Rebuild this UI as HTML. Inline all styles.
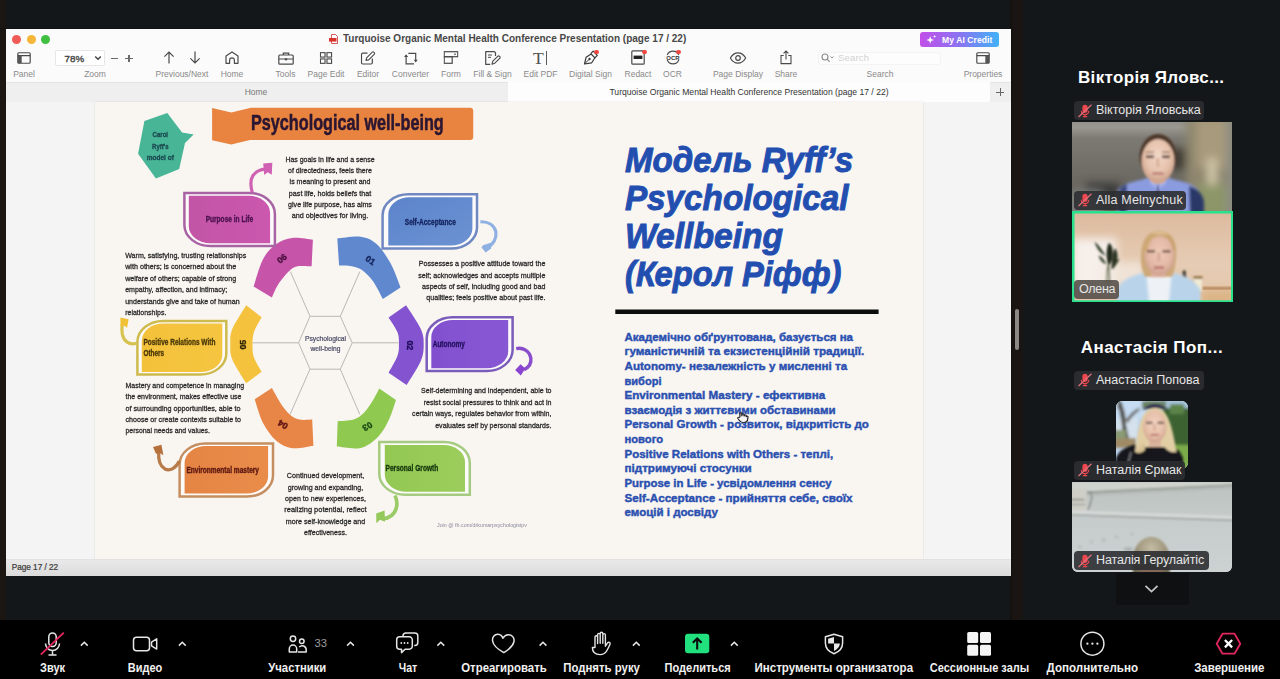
<!DOCTYPE html>
<html><head><meta charset="utf-8">
<style>
*{box-sizing:border-box;margin:0;padding:0}
html,body{width:1280px;height:679px;overflow:hidden;background:#14171a;font-family:"Liberation Sans",sans-serif;}
.abs{position:absolute}
#root{position:relative;width:1280px;height:679px;overflow:hidden;background:#14171a}
/* side strips */
#lstrip{left:0;top:0;width:6px;height:620px;background:#1c1613}
#rstrip{left:1010px;top:0;width:14px;height:620px;background:linear-gradient(90deg,#120f0d 0,#1a1512 25%,#1a1512 80%,#14171a 100%)}
/* pdf window */
#win{left:6px;top:28px;width:1005px;height:548px;background:#f4f4f4;overflow:hidden}
#titlebar{left:0;top:0;width:1005px;height:54px;background:#fbfbfb}
#tabbar{left:0;top:54px;width:1005px;height:20px;background:#efefef;border-top:1px solid #e4e4e4}
#tabactive{left:502px;top:54px;width:482px;height:20px;background:#fdfdfd}
#content{left:0;top:74px;width:1005px;height:457px;background:#f4f4f4}
#slide{left:89px;top:0;width:828px;height:457px;background:#f9f5f1;box-shadow:0 0 1.5px rgba(0,0,0,.14)}
#status{left:0;top:531px;width:1005px;height:17px;background:linear-gradient(#eae9e9,#dcdbdb);border-top:1px solid #e2e2e2}
.tl{width:9px;height:9px;border-radius:50%;top:7px}
.lbl{font-size:8.5px;color:#8a8a8a;top:41.2px;white-space:nowrap;transform:translateX(-50%);letter-spacing:0}
.ic{top:21px;transform:translateX(-50%)}
/* bottom bar */
#bbar{left:0;top:620px;width:1280px;height:59px;background:#000}
.bl{color:#fff;font-size:12px;font-weight:bold;top:41px;white-space:nowrap;transform:translateX(-50%);letter-spacing:-.1px}
.bi{transform:translate(-50%,-50%);top:23px}
/* right panel */
.ptitle{color:#fff;font-weight:bold;font-size:17px;white-space:nowrap;letter-spacing:.34px}
.tag{height:19px;background:rgba(44,45,49,.9);border-radius:4px;color:#e6e6e6;font-size:12.5px;line-height:19px;white-space:nowrap;padding-left:22px;padding-right:4px}
.tag.nomic{padding-left:5px}
</style></head><body>
<div id="root">
<div id="lstrip" class="abs"></div>
<div id="rstrip" class="abs"></div>
<div class="abs" style="left:1014.500px;top:309px;width:4.500px;height:40.500px;border-radius:2px;background:#8c8884"></div>

<div id="win" class="abs">
  <div id="titlebar" class="abs">
    <div class="abs tl" style="left:6px;background:#f05b56"></div>
    <div class="abs tl" style="left:20.5px;background:#f5b63a"></div>
    <div class="abs tl" style="left:35px;background:#3fc041"></div>
    <!-- title -->
    <svg class="abs" style="left:323px;top:6px" width="10" height="10" viewBox="0 0 10 10"><path d="M2.5 .5h4l2 2v7h-6z" fill="#fff" stroke="#c33" stroke-width=".8"/><rect x="0" y="4" width="7.5" height="3.6" fill="#d8322c"/></svg>
    <div class="abs" style="left:337px;top:5px;font-size:10px;font-weight:bold;color:#484848;white-space:nowrap;letter-spacing:0">Turquoise Organic Mental Health Conference Presentation (page 17 / 22)</div>
    <!-- AI credit -->
    <div class="abs" style="left:914px;top:4px;width:79px;height:15px;border-radius:3px;background:linear-gradient(90deg,#c24fe8 0,#8a73f2 50%,#41b2f7 100%)"></div>
    <svg class="abs" style="left:920px;top:6px" width="12" height="11" viewBox="0 0 12 11"><path d="M4.2 2.2 5.2 5 8 6 5.2 7 4.2 9.8 3.2 7 .4 6 3.2 5z" fill="#fff"/><path d="M8.6 1l.45 1.1 1.1.45-1.1.45L8.6 4.1 8.15 3 7.05 2.55 8.15 2.1z" fill="#fff"/></svg>
    <div class="abs" style="left:936px;top:6.5px;font-size:8.5px;font-weight:bold;color:#fff;white-space:nowrap;letter-spacing:.1px">My AI Credit</div>

    <!-- Panel -->
    <svg class="abs ic" style="left:18px;top:24px" width="14.500" height="12" viewBox="0 0 15 13"><rect x=".8" y=".8" width="13.4" height="11.4" rx="1" fill="none" stroke="#4a4a4a" stroke-width="1.3"/><path d="M.8 4h13.4" stroke="#4a4a4a" stroke-width="1.3"/><rect x="1" y="4" width="4" height="8" fill="#555"/></svg>
    <div class="abs lbl" style="left:18px">Panel</div>
    <!-- Zoom -->
    <div class="abs" style="left:49px;top:22px;width:50px;height:16px;background:#fff;border:1px solid #e6e6e6;border-radius:2px"></div>
    <div class="abs" style="left:58.500px;top:24.500px;font-size:9.800px;color:#444;-webkit-text-stroke:.35px #444;letter-spacing:0">78%</div>
    <svg class="abs" style="left:88px;top:27px" width="8" height="6" viewBox="0 0 8 6"><path d="M1.2 1.5 4 4.3 6.8 1.5" fill="none" stroke="#444" stroke-width="1.4"/></svg>
    <div class="abs" style="left:104.500px;top:29.800px;width:7.500px;height:1.200px;background:#6a6a6a"></div>
    <div class="abs" style="left:119.300px;top:29.800px;width:7.500px;height:1.200px;background:#6a6a6a"></div>
    <div class="abs" style="left:122.450px;top:26.500px;width:1.200px;height:7.800px;background:#6a6a6a"></div>
    <div class="abs lbl" style="left:89px">Zoom</div>
    <!-- Prev/Next -->
    <svg class="abs ic" style="left:163px;top:23px" width="12" height="13" viewBox="0 0 12 13"><path d="M6 12.5V1.2M1.4 5.6 6 1l4.6 4.6" fill="none" stroke="#4a4a4a" stroke-width="1.2"/></svg>
    <svg class="abs ic" style="left:189px;top:23px" width="12" height="13" viewBox="0 0 12 13"><path d="M6 .5v11.3M1.4 7.4 6 12l4.6-4.6" fill="none" stroke="#4a4a4a" stroke-width="1.2"/></svg>
    <div class="abs lbl" style="left:176px">Previous/Next</div>
    <!-- Home -->
    <svg class="abs ic" style="left:226px;top:23px" width="14" height="13" viewBox="0 0 14 13"><path d="M1 12.3V5L7 .9 13 5v7.3H9.4V9.2a2.4 2.4 0 0 0-4.8 0v3.1z" fill="none" stroke="#4a4a4a" stroke-width="1.2" stroke-linejoin="round"/></svg>
    <div class="abs lbl" style="left:226px">Home</div>
    <!-- Tools -->
    <svg class="abs ic" style="left:279.5px;top:24px" width="16" height="13" viewBox="0 0 16 13"><rect x=".8" y="3" width="14.4" height="9.2" rx="1" fill="none" stroke="#4a4a4a" stroke-width="1.2"/><path d="M5.3 3V1.2h5.4V3M.8 7h14.4" fill="none" stroke="#4a4a4a" stroke-width="1.2"/><rect x="6.8" y="6.3" width="2.4" height="2" fill="#4a4a4a"/></svg>
    <div class="abs lbl" style="left:279.5px">Tools</div>
    <!-- Page Edit -->
    <svg class="abs ic" style="left:320px;top:24px" width="12.500" height="12" viewBox="0 0 13 13" preserveAspectRatio="none"><g fill="none" stroke="#4a4a4a" stroke-width="1.2"><rect x=".7" y=".7" width="4.8" height="4.8"/><rect x="7.5" y=".7" width="4.8" height="4.8"/><rect x=".7" y="7.5" width="4.8" height="4.8"/><rect x="7.5" y="7.5" width="4.8" height="4.8"/></g></svg>
    <div class="abs lbl" style="left:320px">Page Edit</div>
    <!-- Editor -->
    <svg class="abs ic" style="left:362px;top:23px" width="15" height="14" viewBox="0 0 15 14"><path d="M7 2.2H2.2a1.2 1.2 0 0 0-1.2 1.2v8.4A1.2 1.2 0 0 0 2.200 13h8.400a1.2 1.2 0 0 0 1.200-1.200V7.500" fill="none" stroke="#4a4a4a" stroke-width="1.2"/><path d="M5.500 9.500l.6-2.700L11.800 1.100a1 1 0 0 1 1.400 0l.7.700a1 1 0 0 1 0 1.400L8.200 8.900z" fill="none" stroke="#4a4a4a" stroke-width="1.100" stroke-linejoin="round"/></svg>
    <div class="abs lbl" style="left:362px">Editor</div>
    <!-- Converter -->
    <svg class="abs ic" style="left:404.500px;top:23.500px" width="15" height="13" viewBox="0 0 15 13"><path d="M2.600 3.500V11.800H10.500M4.800 1.300H12.200V9" fill="none" stroke="#4a4a4a" stroke-width="1.200"/><path d="M.6 5 2.600 2.200 4.600 5zM10.200 7.800 12.200 10.600 14.200 7.800z" fill="#4a4a4a"/></svg>
    <div class="abs lbl" style="left:404.500px">Converter</div>
    <!-- Form -->
    <svg class="abs ic" style="left:445px;top:23px" width="15" height="13" viewBox="0 0 15 13"><rect x=".7" y=".7" width="13.600" height="5" fill="none" stroke="#4a4a4a" stroke-width="1.200"/><rect x=".7" y="5.700" width="8" height="6.600" fill="none" stroke="#4a4a4a" stroke-width="1.200"/><path d="M10.500 3.200h2" stroke="#4a4a4a" stroke-width="1"/></svg>
    <div class="abs lbl" style="left:445px">Form</div>
    <!-- Fill & Sign -->
    <svg class="abs ic" style="left:487px;top:23px" width="16" height="14" viewBox="0 0 16 14"><path d="M10.500 5V1.600L9.400.7H.7v12.600h4.500" fill="none" stroke="#4a4a4a" stroke-width="1.200" stroke-linejoin="round"/><path d="M3 4h4M3 6.300h3" stroke="#4a4a4a" stroke-width="1"/><path d="M7 13.200l.8-3L12.700 5.300a1.300 1.300 0 0 1 1.800 0l.2.200a1.300 1.300 0 0 1 0 1.800L9.800 12.200z" fill="none" stroke="#4a4a4a" stroke-width="1.100" stroke-linejoin="round"/></svg>
    <div class="abs lbl" style="left:486.500px">Fill &amp; Sign</div>
    <!-- Edit PDF -->
    <svg class="abs" style="left:524px;top:20px" width="20" height="20" viewBox="0 0 20 20"><text x="8.400" y="16" text-anchor="middle" font-family="Liberation Serif, serif" font-size="17.600" fill="#505050">T</text></svg>
    <div class="abs" style="left:540.400px;top:23.300px;width:1.100px;height:13.400px;background:#5a5a5a"></div>
    <div class="abs lbl" style="left:534.500px">Edit PDF</div>
    <!-- Digital Sign -->
    <svg class="abs ic" style="left:584.500px;top:21px" width="17" height="17" viewBox="0 0 17 17"><path d="M2 15l1.600-6.800 5-3.200 3.800 3.800-3.200 5z" fill="none" stroke="#3a3a3a" stroke-width="1.200" stroke-linejoin="round"/><path d="M8.200 4.600l2.400-2.400 4.200 4.200-2.400 2.400" fill="none" stroke="#3a3a3a" stroke-width="1.200" stroke-linejoin="round"/><path d="M2 15l4.500-4.500" stroke="#3a3a3a" stroke-width="1"/><circle cx="7" cy="10" r="1.200" fill="#3a3a3a"/></svg>
    <div class="abs" style="left:588px;top:21.600px;width:4.600px;height:4.600px;border-radius:50%;background:#f0483e"></div>
    <div class="abs lbl" style="left:584.500px">Digital Sign</div>
    <!-- Redact -->
    <svg class="abs ic" style="left:632px;top:22px" width="14" height="15" viewBox="0 0 14 15"><rect x=".8" y=".8" width="12.400" height="13.400" rx="1" fill="none" stroke="#4a4a4a" stroke-width="1.200"/><rect x="2.600" y="5.600" width="8.800" height="3.400" fill="#222"/></svg>
    <div class="abs" style="left:636px;top:21.600px;width:4.600px;height:4.600px;border-radius:50%;background:#f0483e"></div>
    <div class="abs lbl" style="left:632px">Redact</div>
    <!-- OCR -->
    <svg class="abs ic" style="left:666.500px;top:22px" width="16" height="15" viewBox="0 0 16 15"><path d="M2.200 5a6.300 6.300 0 0 1 11.600 0M13.800 10a6.300 6.300 0 0 1-11.600 0" fill="none" stroke="#4a4a4a" stroke-width="1.100"/><text x="8" y="9.700" font-family="Liberation Sans" font-weight="bold" font-size="6" text-anchor="middle" fill="#333">OCR</text></svg>
    <div class="abs" style="left:670px;top:21.600px;width:4.600px;height:4.600px;border-radius:50%;background:#f0483e"></div>
    <div class="abs lbl" style="left:666.500px">OCR</div>
    <!-- Page Display -->
    <svg class="abs ic" style="left:732px;top:24px" width="17" height="12" viewBox="0 0 17 12"><path d="M.8 6C3 2.300 5.600 .8 8.500 .8S14 2.300 16.200 6C14 9.700 11.400 11.200 8.500 11.200S3 9.700 .8 6z" fill="none" stroke="#4a4a4a" stroke-width="1.200"/><circle cx="8.500" cy="6" r="2.300" fill="none" stroke="#4a4a4a" stroke-width="1.200"/></svg>
    <div class="abs lbl" style="left:732px">Page Display</div>
    <!-- Share -->
    <svg class="abs ic" style="left:780px;top:22.300px" width="12.500" height="14.500" viewBox="0 0 13 16"><path d="M4 6H1v9h11V6H9" fill="none" stroke="#4a4a4a" stroke-width="1.200"/><path d="M6.500 10.500V1.200M3.800 3.800 6.500 1.100 9.200 3.800" fill="none" stroke="#4a4a4a" stroke-width="1.200"/></svg>
    <div class="abs lbl" style="left:780px">Share</div>
    <!-- Search -->
    <div class="abs" style="left:812px;top:24px;width:123px;height:13px;background:#fdfdfd;border:1px solid #f3f3f3;border-radius:3px"></div>
    <svg class="abs" style="left:815px;top:25px" width="14" height="10" viewBox="0 0 14 10"><circle cx="4" cy="4" r="3" fill="none" stroke="#8a8a8a" stroke-width="1.100"/><path d="M6.200 6.200 8.600 8.800" stroke="#8a8a8a" stroke-width="1.100"/><path d="M9.500 3.500l1.500 1.500 1.500-1.500" fill="none" stroke="#8a8a8a" stroke-width="1"/></svg>
    <div class="abs" style="left:832px;top:24.300px;font-size:9.500px;color:#d2d2d2;letter-spacing:.2px">Search</div>
    <div class="abs lbl" style="left:874px">Search</div>
    <!-- Properties -->
    <svg class="abs ic" style="left:977px;top:24px" width="14.500" height="12" viewBox="0 0 15 13"><rect x=".8" y=".8" width="13.400" height="11.400" rx="1" fill="none" stroke="#4a4a4a" stroke-width="1.300"/><path d="M.8 4h13.400" stroke="#4a4a4a" stroke-width="1.300"/><rect x="10" y="4" width="4" height="8" fill="#555"/></svg>
    <div class="abs lbl" style="left:977px">Properties</div>
  </div>
  <div id="tabbar" class="abs"></div>
  <div id="tabactive" class="abs"></div>
  <div class="abs" style="left:250px;top:59px;font-size:8.5px;color:#777;transform:translateX(-50%)">Home</div>
  <div class="abs" style="left:743px;top:59px;font-size:8.6px;color:#333;transform:translateX(-50%);white-space:nowrap">Turquoise Organic Mental Health Conference Presentation (page 17 / 22)</div>
  <div class="abs" style="left:990px;top:63.500px;width:8px;height:1px;background:#666"></div>
  <div class="abs" style="left:993.500px;top:60px;width:1px;height:8px;background:#666"></div>
  <div id="content" class="abs">
    <div id="slide" class="abs"><!--SLIDE--><svg class="abs" style="left:0;top:0" width="828" height="457" viewBox="95 102 828 457" font-family="Liberation Sans, sans-serif">
<defs>
<linearGradient id="gpk" x1="0" y1="0" x2="1" y2="0"><stop offset="0" stop-color="#c255a6"/><stop offset="1" stop-color="#cb58ae"/></linearGradient>
<linearGradient id="gbl" x1="0" y1="0" x2="1" y2="1"><stop offset="0" stop-color="#5b84cb"/><stop offset="1" stop-color="#6c92d2"/></linearGradient>
<linearGradient id="gpu" x1="0" y1="0" x2="1" y2="0"><stop offset="0" stop-color="#8250cf"/><stop offset="1" stop-color="#8758d4"/></linearGradient>
<linearGradient id="gye" x1="0" y1="0" x2="1" y2="0"><stop offset="0" stop-color="#f4c13a"/><stop offset="1" stop-color="#f5c540"/></linearGradient>
<linearGradient id="gor" x1="0" y1="0" x2="1" y2="0"><stop offset="0" stop-color="#e58544"/><stop offset="1" stop-color="#e98c4a"/></linearGradient>
<linearGradient id="ggr" x1="0" y1="0" x2="1" y2="0"><stop offset="0" stop-color="#93c853"/><stop offset="1" stop-color="#9ccd5c"/></linearGradient>
<filter id="bl" x="-5%" y="-5%" width="110%" height="110%"><feGaussianBlur stdDeviation="0.45"/></filter>
</defs>
<g filter="url(#bl)">
<path d="M144.4 121.1L167.3 112.9L182.1 132.6L193.6 134.5L185 143.1L179.2 169L155.9 178.6L138.1 153.7Z" fill="#47b596"/>
<text x="160.3" y="137.0" font-size="7.2" text-anchor="middle" fill="#1d4a52" font-weight="bold" textLength="15.5" lengthAdjust="spacingAndGlyphs"  stroke="#1d4a52" stroke-width="0.32">Carol</text>
<text x="160.3" y="148.5" font-size="7.2" text-anchor="middle" fill="#1d4a52" font-weight="bold" textLength="16.5" lengthAdjust="spacingAndGlyphs"  stroke="#1d4a52" stroke-width="0.32">Ryff's</text>
<text x="160.3" y="160.0" font-size="7.2" text-anchor="middle" fill="#1d4a52" font-weight="bold" textLength="27" lengthAdjust="spacingAndGlyphs"  stroke="#1d4a52" stroke-width="0.32">model of</text>
<path d="M212.1 108L231.2 112.4L248 108.6Q249 107.8 252 107.7H470.2Q473.2 107.7 473.2 110.7V137Q473.2 140 470.2 140H250L231.2 144.5L212.1 140.2Z" fill="#e8843f"/>
<text x="251" y="130.4" font-size="22.3" text-anchor="start" fill="#2a1530" font-weight="bold" textLength="192.7" lengthAdjust="spacingAndGlyphs"  stroke="#2a1530" stroke-width="0.55">Psychological well-being</text>
<text x="330" y="162.0" font-size="8" text-anchor="middle" fill="#2b2b2b" font-weight="normal" textLength="89.2" lengthAdjust="spacingAndGlyphs"  stroke="#2b2b2b" stroke-width="0.3">Has goals in life and a sense</text>
<text x="330" y="173.17" font-size="8" text-anchor="middle" fill="#2b2b2b" font-weight="normal" textLength="83.8" lengthAdjust="spacingAndGlyphs"  stroke="#2b2b2b" stroke-width="0.3">of directedness, feels there</text>
<text x="330" y="184.34" font-size="8" text-anchor="middle" fill="#2b2b2b" font-weight="normal" textLength="80.8" lengthAdjust="spacingAndGlyphs"  stroke="#2b2b2b" stroke-width="0.3">is meaning to present and</text>
<text x="330" y="195.51" font-size="8" text-anchor="middle" fill="#2b2b2b" font-weight="normal" textLength="82.3" lengthAdjust="spacingAndGlyphs"  stroke="#2b2b2b" stroke-width="0.3">past life, holds beliefs that</text>
<text x="330" y="206.68" font-size="8" text-anchor="middle" fill="#2b2b2b" font-weight="normal" textLength="83.8" lengthAdjust="spacingAndGlyphs"  stroke="#2b2b2b" stroke-width="0.3">give life purpose, has aims</text>
<text x="330" y="217.85" font-size="8" text-anchor="middle" fill="#2b2b2b" font-weight="normal" textLength="76.6" lengthAdjust="spacingAndGlyphs"  stroke="#2b2b2b" stroke-width="0.3">and objectives for living.</text>
<text x="125.2" y="258.0" font-size="8" text-anchor="start" fill="#2b2b2b" font-weight="normal" textLength="121.1" lengthAdjust="spacingAndGlyphs"  stroke="#2b2b2b" stroke-width="0.3">Warm, satisfying, trusting relationships</text>
<text x="125.2" y="269.4" font-size="8" text-anchor="start" fill="#2b2b2b" font-weight="normal" textLength="111" lengthAdjust="spacingAndGlyphs"  stroke="#2b2b2b" stroke-width="0.3">with others; is concerned about the</text>
<text x="125.2" y="280.8" font-size="8" text-anchor="start" fill="#2b2b2b" font-weight="normal" textLength="111" lengthAdjust="spacingAndGlyphs"  stroke="#2b2b2b" stroke-width="0.3">welfare of others; capable of strong</text>
<text x="125.2" y="292.2" font-size="8" text-anchor="start" fill="#2b2b2b" font-weight="normal" textLength="102" lengthAdjust="spacingAndGlyphs"  stroke="#2b2b2b" stroke-width="0.3">empathy, affection, and intimacy;</text>
<text x="125.2" y="303.6" font-size="8" text-anchor="start" fill="#2b2b2b" font-weight="normal" textLength="114.4" lengthAdjust="spacingAndGlyphs"  stroke="#2b2b2b" stroke-width="0.3">understands give and take of human</text>
<text x="125.2" y="315.0" font-size="8" text-anchor="start" fill="#2b2b2b" font-weight="normal" textLength="41.2" lengthAdjust="spacingAndGlyphs"  stroke="#2b2b2b" stroke-width="0.3">relationships.</text>
<text x="125.5" y="388.1" font-size="8" text-anchor="start" fill="#2b2b2b" font-weight="normal" textLength="118.7" lengthAdjust="spacingAndGlyphs"  stroke="#2b2b2b" stroke-width="0.3">Mastery and competence in managing</text>
<text x="125.5" y="399.43" font-size="8" text-anchor="start" fill="#2b2b2b" font-weight="normal" textLength="116" lengthAdjust="spacingAndGlyphs"  stroke="#2b2b2b" stroke-width="0.3">the environment, makes effective use</text>
<text x="125.5" y="410.76000000000005" font-size="8" text-anchor="start" fill="#2b2b2b" font-weight="normal" textLength="115" lengthAdjust="spacingAndGlyphs"  stroke="#2b2b2b" stroke-width="0.3">of surrounding opportunities, able to</text>
<text x="125.5" y="422.09000000000003" font-size="8" text-anchor="start" fill="#2b2b2b" font-weight="normal" textLength="115.5" lengthAdjust="spacingAndGlyphs"  stroke="#2b2b2b" stroke-width="0.3">choose or create contexts suitable to</text>
<text x="125.5" y="433.42" font-size="8" text-anchor="start" fill="#2b2b2b" font-weight="normal" textLength="84.5" lengthAdjust="spacingAndGlyphs"  stroke="#2b2b2b" stroke-width="0.3">personal needs and values.</text>
<text x="545.4" y="266.3" font-size="8" text-anchor="end" fill="#2b2b2b" font-weight="normal" textLength="126.6" lengthAdjust="spacingAndGlyphs"  stroke="#2b2b2b" stroke-width="0.3">Possesses a positive attitude toward the</text>
<text x="545.4" y="277.57" font-size="8" text-anchor="end" fill="#2b2b2b" font-weight="normal" textLength="127.2" lengthAdjust="spacingAndGlyphs"  stroke="#2b2b2b" stroke-width="0.3">self; acknowledges and accepts multiple</text>
<text x="545.4" y="288.84000000000003" font-size="8" text-anchor="end" fill="#2b2b2b" font-weight="normal" textLength="123.3" lengthAdjust="spacingAndGlyphs"  stroke="#2b2b2b" stroke-width="0.3">aspects of self, including good and bad</text>
<text x="545.4" y="300.11" font-size="8" text-anchor="end" fill="#2b2b2b" font-weight="normal" textLength="119.1" lengthAdjust="spacingAndGlyphs"  stroke="#2b2b2b" stroke-width="0.3">qualities; feels positive about past life.</text>
<text x="551.5" y="393.3" font-size="8" text-anchor="end" fill="#2b2b2b" font-weight="normal" textLength="130.4" lengthAdjust="spacingAndGlyphs"  stroke="#2b2b2b" stroke-width="0.3">Self-determining and independent, able to</text>
<text x="551.5" y="404.7" font-size="8" text-anchor="end" fill="#2b2b2b" font-weight="normal" textLength="127.8" lengthAdjust="spacingAndGlyphs"  stroke="#2b2b2b" stroke-width="0.3">resist social pressures to think and act in</text>
<text x="551.5" y="416.1" font-size="8" text-anchor="end" fill="#2b2b2b" font-weight="normal" textLength="139.4" lengthAdjust="spacingAndGlyphs"  stroke="#2b2b2b" stroke-width="0.3">certain ways, regulates behavior from within,</text>
<text x="551.5" y="427.5" font-size="8" text-anchor="end" fill="#2b2b2b" font-weight="normal" textLength="116.3" lengthAdjust="spacingAndGlyphs"  stroke="#2b2b2b" stroke-width="0.3">evaluates self by personal standards.</text>
<text x="325.5" y="478.2" font-size="8" text-anchor="middle" fill="#2b2b2b" font-weight="normal" textLength="77.3" lengthAdjust="spacingAndGlyphs"  stroke="#2b2b2b" stroke-width="0.3">Continued development,</text>
<text x="325.5" y="489.53999999999996" font-size="8" text-anchor="middle" fill="#2b2b2b" font-weight="normal" textLength="75.5" lengthAdjust="spacingAndGlyphs"  stroke="#2b2b2b" stroke-width="0.3">growing and expanding,</text>
<text x="325.5" y="500.88" font-size="8" text-anchor="middle" fill="#2b2b2b" font-weight="normal" textLength="80.9" lengthAdjust="spacingAndGlyphs"  stroke="#2b2b2b" stroke-width="0.3">open to new experiences,</text>
<text x="325.5" y="512.22" font-size="8" text-anchor="middle" fill="#2b2b2b" font-weight="normal" textLength="82.3" lengthAdjust="spacingAndGlyphs"  stroke="#2b2b2b" stroke-width="0.3">realizing  potential,  reflect</text>
<text x="325.5" y="523.56" font-size="8" text-anchor="middle" fill="#2b2b2b" font-weight="normal" textLength="79.4" lengthAdjust="spacingAndGlyphs"  stroke="#2b2b2b" stroke-width="0.3">more self-knowledge and</text>
<text x="325.5" y="534.9" font-size="8" text-anchor="middle" fill="#2b2b2b" font-weight="normal" textLength="42.9" lengthAdjust="spacingAndGlyphs"  stroke="#2b2b2b" stroke-width="0.3">effectiveness.</text>
<text x="437" y="526.5" font-size="5.5" text-anchor="start" fill="#8a8a9c" font-weight="normal" textLength="90" lengthAdjust="spacingAndGlyphs" >Join @ fb.com/drkumarpsychologistpv</text>
<g fill="none" stroke="#b9b7b4" stroke-width="1"><path d="M298.6 342.8L310 316.3H340.3L352.2 342.8L340.3 369.2H310Z"/><path d="M310 316.3L290.4 271.6M340.3 316.3L359.8 271.6M298.6 342.8H252.5M352.2 342.8H398.5M310 369.2L290.1 414.3M340.3 369.2L359.8 414.3"/></g>
<text x="325.5" y="340.6" font-size="6.6" text-anchor="middle" fill="#4b4b66" font-weight="normal" textLength="41" lengthAdjust="spacingAndGlyphs" stroke="#4b4b66" stroke-width="0.2">Psychological</text>
<text x="325.5" y="351" font-size="6.6" text-anchor="middle" fill="#4b4b66" font-weight="normal" textLength="30" lengthAdjust="spacingAndGlyphs" stroke="#4b4b66" stroke-width="0.2">well-being</text>
<path d="M253.6 286.6C255.2 282.0 259.2 266.3 263.0 259.2C266.8 252.1 271.4 247.6 276.3 244.1C281.2 240.6 286.1 238.7 292.2 238.0C298.3 237.3 309.4 239.4 312.9 239.7L311.6 266.3C309.2 266.3 301.3 265.4 297.5 266.3C293.7 267.2 291.9 268.5 288.7 271.6C285.4 274.7 280.8 280.5 278.0 284.8C275.2 289.1 272.9 295.5 271.9 297.6Z" fill="#c655aa"/>
<path d="M337.3 238.5C341.2 238.2 354.1 235.8 360.7 236.7C367.2 237.6 371.6 239.6 376.6 244.1C381.6 248.6 386.7 256.4 390.7 263.6C394.7 270.8 398.9 283.5 400.5 287.5L382.8 299C381.2 296.1 376.5 286.2 373.0 281.3C369.5 276.4 365.4 272.4 361.6 269.8C357.8 267.2 353.9 266.6 350.1 265.9C346.4 265.2 340.9 265.5 339.1 265.4Z" fill="#5f88ce"/>
<path d="M406.1 305.2C408.6 309.2 417.9 322.4 420.8 329.0C423.7 335.6 423.7 339.2 423.7 344.5C423.7 349.8 423.6 354.2 420.8 361.0C418.0 367.8 409.0 381.1 406.6 385.1L388.6 372.7C390.1 369.9 395.7 360.7 397.4 356.0C399.1 351.3 398.9 348.4 398.9 344.5C398.9 340.6 399.3 337.1 397.6 332.6C395.9 328.1 390.1 320.0 388.6 317.5Z" fill="#8452d0"/>
<path d="M396 400.1C394.8 403.4 391.9 413.6 389.0 419.6C386.1 425.7 383.1 431.7 378.4 436.4C373.7 441.1 367.6 446.2 360.7 447.9C353.8 449.6 340.8 446.8 336.8 446.6L337.7 421.3C340.4 421.0 349.2 421.1 353.6 419.6C358.0 418.1 360.9 415.8 364.2 412.5C367.4 409.2 370.6 404.1 373.1 400.1C375.6 396.1 378.2 390.5 379.2 388.6Z" fill="#8fc950"/>
<path d="M313.4 445.7C309.9 446.1 298.4 449.0 292.2 448.2C286.0 447.4 281.2 445.0 276.3 440.8C271.4 436.6 266.6 430.0 263.0 423.1C259.4 416.2 256.1 403.2 254.7 399.2L271.9 388.1C273.2 390.4 276.9 397.5 279.8 401.9C282.7 406.3 286.2 411.4 289.5 414.3C292.8 417.2 295.5 418.7 299.3 419.6C303.1 420.5 310.1 419.6 312.2 419.6Z" fill="#e88646"/>
<path d="M246.2 383.3C243.9 379.4 235.2 366.5 232.5 360.0C229.8 353.5 230.3 349.7 230.3 344.5C230.3 339.3 229.7 335.6 232.3 329.0C235.0 322.4 243.9 309.2 246.2 305.2L261.6 317.2C260.3 319.7 255.5 327.4 254.0 332.0C252.5 336.6 252.5 340.3 252.5 344.5C252.5 348.7 252.3 352.4 253.8 357.0C255.3 361.6 260.3 369.3 261.6 371.8Z" fill="#f4c23c"/>
<text transform="translate(281.9 258.6) rotate(-38)" x="0" y="3" font-size="8.8" font-weight="bold" text-anchor="middle" fill="#4a1040" stroke="#4a1040" stroke-width="0.35" textLength="9.8" lengthAdjust="spacingAndGlyphs">06</text>
<text transform="translate(370.4 260.4) rotate(32)" x="0" y="3" font-size="8.8" font-weight="bold" text-anchor="middle" fill="#16255e" stroke="#16255e" stroke-width="0.35" textLength="9.8" lengthAdjust="spacingAndGlyphs">01</text>
<text transform="translate(409.8 345.3) rotate(90)" x="0" y="3" font-size="8.8" font-weight="bold" text-anchor="middle" fill="#23105e" stroke="#23105e" stroke-width="0.35" textLength="9.8" lengthAdjust="spacingAndGlyphs">02</text>
<text transform="translate(367.4 426.3) rotate(148)" x="0" y="3" font-size="8.8" font-weight="bold" text-anchor="middle" fill="#1f4a14" stroke="#1f4a14" stroke-width="0.35" textLength="9.8" lengthAdjust="spacingAndGlyphs">03</text>
<text transform="translate(283 424.5) rotate(212)" x="0" y="3" font-size="8.8" font-weight="bold" text-anchor="middle" fill="#5a1212" stroke="#5a1212" stroke-width="0.35" textLength="9.8" lengthAdjust="spacingAndGlyphs">04</text>
<text transform="translate(243.2 344.7) rotate(-90)" x="0" y="3" font-size="8.8" font-weight="bold" text-anchor="middle" fill="#2e2406" stroke="#2e2406" stroke-width="0.35" textLength="9.8" lengthAdjust="spacingAndGlyphs">05</text>
<path d="M184.4 192.9H248.89999999999998A26 21 0 0 1 274.9 213.9V246H210.4A26 21 0 0 1 184.4 225Z" fill="#fdfafa" stroke="#a763a3" stroke-width="2.5"/><path d="M188.8 195.7H248.60000000000002A21.5 17 0 0 1 270.1 212.7V243.2H210.3A21.5 17 0 0 1 188.8 226.2Z" fill="url(#gpk)"/>
<text x="229.4" y="222.4" font-size="8.2" text-anchor="middle" fill="#4a124e" font-weight="bold" textLength="47.5" lengthAdjust="spacingAndGlyphs"  stroke="#4a124e" stroke-width="0.32">Purpose in Life</text>
<path d="M408.6 194.3H477V227.6A26 21 0 0 1 451 248.6H382.6V215.3A26 21 0 0 1 408.6 194.3Z" fill="#fdfafa" stroke="#7088c2" stroke-width="2.5"/><path d="M409.8 197.3H472.4V228.6A21.5 17 0 0 1 450.9 245.6H388.3V214.3A21.5 17 0 0 1 409.8 197.3Z" fill="url(#gbl)"/>
<text x="430.3" y="224.6" font-size="8.2" text-anchor="middle" fill="#14235e" font-weight="bold" textLength="51.1" lengthAdjust="spacingAndGlyphs"  stroke="#14235e" stroke-width="0.32">Self-Acceptance</text>
<path d="M452.7 317.3H512.6V350A26 21 0 0 1 486.6 371H426.7V338.3A26 21 0 0 1 452.7 317.3Z" fill="#fdfafa" stroke="#7a5cba" stroke-width="2.5"/><path d="M452.8 319.9H508.2V351.2A21.5 17 0 0 1 486.7 368.2H431.3V336.9A21.5 17 0 0 1 452.8 319.9Z" fill="url(#gpu)"/>
<text x="432.7" y="346.9" font-size="8.2" text-anchor="start" fill="#23105e" font-weight="bold" textLength="32.2" lengthAdjust="spacingAndGlyphs"  stroke="#23105e" stroke-width="0.32">Autonomy</text>
<path d="M163.4 320.9H226.3V353.5A26 21 0 0 1 200.3 374.5H137.4V341.9A26 21 0 0 1 163.4 320.9Z" fill="#fdfafa" stroke="#cdbb4e" stroke-width="2.5"/><path d="M163.3 323.5H222.3V355A21.5 17 0 0 1 200.8 372H141.8V340.5A21.5 17 0 0 1 163.3 323.5Z" fill="url(#gye)"/>
<text x="143.4" y="345" font-size="8.2" text-anchor="start" fill="#4a3808" font-weight="bold" textLength="72" lengthAdjust="spacingAndGlyphs"  stroke="#4a3808" stroke-width="0.32">Positive Relations With</text>
<text x="143.4" y="356.2" font-size="8.2" text-anchor="start" fill="#4a3808" font-weight="bold" textLength="20.7" lengthAdjust="spacingAndGlyphs"  stroke="#4a3808" stroke-width="0.32">Others</text>
<path d="M205.6 443.5H273V475.6A26 21 0 0 1 247 496.6H179.6V464.5A26 21 0 0 1 205.6 443.5Z" fill="#fdfafa" stroke="#c58e60" stroke-width="2.5"/><path d="M206.1 445.9H268.1V476.6A21.5 17 0 0 1 246.60000000000002 493.6H184.6V462.9A21.5 17 0 0 1 206.1 445.9Z" fill="url(#gor)"/>
<text x="222.7" y="473.1" font-size="8.2" text-anchor="middle" fill="#5a1510" font-weight="bold" textLength="72.6" lengthAdjust="spacingAndGlyphs"  stroke="#5a1510" stroke-width="0.32">Environmental mastery</text>
<path d="M379.3 441.9H443.8A26 21 0 0 1 469.8 462.9V494.8H405.3A26 21 0 0 1 379.3 473.8Z" fill="#fdfafa" stroke="#a5cb80" stroke-width="2.5"/><path d="M384.8 444.9H443.5A21.5 17 0 0 1 465 461.9V491.8H406.3A21.5 17 0 0 1 384.8 474.8Z" fill="url(#ggr)"/>
<text x="385.5" y="471.2" font-size="8.2" text-anchor="start" fill="#17380e" font-weight="bold" textLength="52.8" lengthAdjust="spacingAndGlyphs"  stroke="#17380e" stroke-width="0.32">Personal Growth</text>
<path d="M252.2 192.5C250.5 186 250 180 253 175.500C256 171.500 260 169.500 265.500 169.200" fill="none" stroke="#cf62b2" stroke-width="3.2"/><path d="M263.200 163.600L272.300 162.800L271.800 174.800L267.800 172.200L264.200 175Z" fill="#d060b4"/>
<path d="M480.400 221.800C488 221.400 494 225 495.800 231.500C497 238 493.500 244 488.500 247" fill="none" stroke="#8fb0e2" stroke-width="3.2"/><path d="M483 245.200L491.500 242.500L491.200 248.500L485.600 252.500L481.500 247.500Z" fill="#8fb0e2"/>
<path d="M516.200 348.600C523 347 529.500 351 530.800 358C531.600 363.500 528.500 367.500 524 369.800" fill="none" stroke="#8a4ecb" stroke-width="3.400"/><path d="M520.600 364.200L525.200 368.600L520.800 375.400L515.200 370Z" fill="#8a42d0"/>
<path d="M136.400 343.300C129 345.600 123.600 341 122.300 334C121.700 330 121.800 327 122.300 324" fill="none" stroke="#d6c350" stroke-width="3.200"/><path d="M120.400 317.600L128.600 319.300L127.100 327.800L123.900 325.500L120.500 326.600Z" fill="#f0c136"/>
<path d="M179.400 461C176 468 170 471.500 165 469C159.500 466 158.200 458 158.800 451" fill="none" stroke="#b87a48" stroke-width="3.300"/><path d="M153 447L161.400 444.800L163.400 455.300L160.300 453.200L156 453.800Z" fill="#b5703a"/>
<path d="M395 495.500C398.500 503 397 511 391.500 515.500C389 517.500 386 518.600 383 518.800" fill="none" stroke="#9bcb66" stroke-width="3.600"/><path d="M384.600 510.400L376.200 513.400L376.400 523.200L380 519.800L384.900 521.800Z" fill="#94c85a"/>
</g>
<g font-weight="bold" font-style="italic" fill="#224eb0" stroke="#224eb0" stroke-width="0.95" font-size="34.6">
<text x="624.9" y="171.5" textLength="228.3" lengthAdjust="spacingAndGlyphs">Модель Ryff’s</text>
<text x="624.9" y="209.6" textLength="223.7" lengthAdjust="spacingAndGlyphs">Psychological</text>
<text x="624.9" y="247.6" textLength="158.3" lengthAdjust="spacingAndGlyphs">Wellbeing</text>
<text x="624.9" y="285.5" textLength="216.6" lengthAdjust="spacingAndGlyphs">(Керол Ріфф)</text>
</g>
<rect x="615.3" y="309.5" width="263.300" height="4.500" fill="#0c0c0c"/>
<g font-weight="bold" fill="#2a50b0" stroke="#2a50b0" stroke-width="0.42" font-size="11.2">
<text x="624.5" y="340.75" textLength="228.5" lengthAdjust="spacingAndGlyphs">Академічно обґрунтована, базується на</text>
<text x="624.5" y="355.37" textLength="239.7" lengthAdjust="spacingAndGlyphs">гуманістичній та екзистенційній традиції.</text>
<text x="624.5" y="369.99" textLength="222.6" lengthAdjust="spacingAndGlyphs">Autonomy- незалежність у мисленні та</text>
<text x="624.5" y="384.61" textLength="37" lengthAdjust="spacingAndGlyphs">виборі</text>
<text x="624.5" y="399.23" textLength="200.7" lengthAdjust="spacingAndGlyphs">Environmental Mastery - ефективна</text>
<text x="624.5" y="413.85" textLength="211" lengthAdjust="spacingAndGlyphs">взаємодія з життєвими обставинами</text>
<text x="624.5" y="428.47" textLength="244.4" lengthAdjust="spacingAndGlyphs">Personal Growth - розвиток, відкритість до</text>
<text x="624.5" y="443.09" textLength="38.6" lengthAdjust="spacingAndGlyphs">нового</text>
<text x="624.5" y="457.71" textLength="208.7" lengthAdjust="spacingAndGlyphs">Positive Relations with Others - теплі,</text>
<text x="624.5" y="472.33" textLength="127.2" lengthAdjust="spacingAndGlyphs">підтримуючі стосунки</text>
<text x="624.5" y="486.95" textLength="207.1" lengthAdjust="spacingAndGlyphs">Purpose in Life - усвідомлення сенсу</text>
<text x="624.5" y="501.57" textLength="228.1" lengthAdjust="spacingAndGlyphs">Self-Acceptance - прийняття себе, своїх</text>
<text x="624.5" y="516.19" textLength="93.4" lengthAdjust="spacingAndGlyphs">емоцій і досвіду</text>
</g>
<g transform="translate(736.6 411.9) scale(.95 .72)"><path d="M3.500 7V2.200a1 1 0 0 1 2 0V6l.3-2.300a1 1 0 0 1 2 .2V6.200l.5-1.400a.9.900 0 0 1 1.800.4V7l.4-.8a.8.800 0 0 1 1.500.5L11.500 11.500c-.3 1.800-1.500 3-3.500 3H6.500c-1.500 0-2.500-.8-3.300-2.200L1.200 9c-.5-1 .6-1.900 1.400-1.200z" fill="#f4f4f4" stroke="#1a1a1a" stroke-width="1.25"/></g>
</svg><!--/SLIDE--></div>
  </div>
  <div id="status" class="abs"><div class="abs" style="left:5.700px;top:3px;font-size:8.200px;color:#3a3a3a;-webkit-text-stroke:.2px #3a3a3a;white-space:nowrap">Page 17 / 22</div></div>
</div>


<!-- RIGHT PANEL -->
<div class="abs ptitle" style="left:1078px;top:68px;width:147px;text-align:left">Вікторія Яловс...</div>
<div class="abs tag" style="left:1074px;top:101.2px;width:129.5px;"><svg class="abs" style="left:3px;top:2.500px" width="16" height="14" viewBox="0 0 16 14"><rect x="5.400" y=".8" width="5.200" height="8" rx="2.600" fill="#f0474f"/><path d="M4.200 6.800a3.800 3.800 0 0 0 7.600 0M8 10.600v1.800M5.800 12.600h4.400" fill="none" stroke="#f0474f" stroke-width="1.100"/><path d="M1.500 13 14.500 .8" stroke="#e2707c" stroke-width="1.200"/></svg>Вікторія Яловська</div>
<div class="abs" id="v1" style="left:1072px;top:122px;width:160px;height:89px;overflow:hidden;background:#6e6c64">
<svg class="abs" style="left:0;top:0" width="160" height="89" viewBox="1072 122 160 89">
<defs><filter id="b5" x="-20%" y="-20%" width="140%" height="140%"><feGaussianBlur stdDeviation="4"/></filter><filter id="b2" x="-20%" y="-20%" width="140%" height="140%"><feGaussianBlur stdDeviation="1.600"/></filter><filter id="b1" x="-20%" y="-20%" width="140%" height="140%"><feGaussianBlur stdDeviation="0.900"/></filter>
<linearGradient id="v1bg" x1="0" y1="0" x2="0" y2="1"><stop offset="0" stop-color="#84847e"/><stop offset=".14" stop-color="#9a9890"/><stop offset=".24" stop-color="#7c7a72"/><stop offset=".6" stop-color="#6c6a62"/><stop offset="1" stop-color="#5e5c56"/></linearGradient>
<radialGradient id="face1" cx=".5" cy=".4" r=".62"><stop offset="0" stop-color="#f2d8c8"/><stop offset=".6" stop-color="#e6c2ac"/><stop offset="1" stop-color="#c89a84"/></radialGradient></defs>
<rect x="1062" y="112" width="180" height="110" fill="url(#v1bg)"/>
<g filter="url(#b5)">
<rect x="1186" y="112" width="60" height="110" fill="#8e866e"/>
<rect x="1196" y="118" width="30" height="50" fill="#a89a7c"/>
<rect x="1207" y="158" width="10" height="48" fill="#cdc4a4"/>
<rect x="1196" y="185" width="30" height="30" fill="#8c9668"/>
<rect x="1226" y="112" width="12" height="110" fill="#8c8c82"/>
<rect x="1172" y="148" width="14" height="22" fill="#3e3832"/>
<rect x="1086" y="183" width="34" height="14" fill="#3a3a3a"/>
<rect x="1072" y="192" width="30" height="24" fill="#8a8c8a"/>
</g>
<g filter="url(#b2)">
<path d="M1117 214V192c2-6 12-10 24-12l8-3h18l8 3c12 2 22 6 24 12v22z" fill="#8b9be0"/>
<path d="M1189 186c8 2 14 8 15 16v12h-14z" fill="#2a3868"/>
<path d="M1119 190c2-3 5-5 8-6v30h-9z" fill="#3a4880"/>
</g>
<g filter="url(#b1)">
<ellipse cx="1158" cy="157" rx="18.500" ry="23" fill="#4e382c"/>
<rect x="1150" y="172" width="16" height="12" fill="#dcb49c"/>
<ellipse cx="1158" cy="161" rx="16.500" ry="22" fill="url(#face1)"/>
<rect x="1146" y="155.500" width="8" height="2.600" fill="#4a3630" opacity=".85"/>
<rect x="1162" y="155.500" width="8" height="2.600" fill="#4a3630" opacity=".85"/>
<rect x="1146" y="151.500" width="8" height="1.400" fill="#7a5a4a" opacity=".7"/>
<rect x="1162" y="151.500" width="8" height="1.400" fill="#7a5a4a" opacity=".7"/>
<rect x="1156" y="158" width="3.500" height="9" fill="#d4a890" opacity=".7"/>
<rect x="1152.500" y="172.300" width="11" height="2.400" fill="#b87470" opacity=".9"/>
<path d="M1150 181l8 5 8-5v3l-8 6-8-6z" fill="#a0aeea"/>
<rect x="1157" y="186" width="1.600" height="12" fill="#4a4a6a"/>
</g>
</svg>
</div>
<div class="abs tag" style="left:1074px;top:190.6px;width:112px;letter-spacing:.2px"><svg class="abs" style="left:3px;top:2.500px" width="16" height="14" viewBox="0 0 16 14"><rect x="5.400" y=".8" width="5.200" height="8" rx="2.600" fill="#f0474f"/><path d="M4.200 6.800a3.800 3.800 0 0 0 7.600 0M8 10.600v1.800M5.800 12.600h4.400" fill="none" stroke="#f0474f" stroke-width="1.100"/><path d="M1.500 13 14.500 .8" stroke="#e2707c" stroke-width="1.200"/></svg>Alla Melnychuk</div>
<div class="abs" id="v2" style="left:1071.500px;top:210.700px;width:161.500px;height:91.800px;overflow:hidden;background:#e2c6ac">
<svg class="abs" style="left:0;top:0" width="161.500" height="91.800" viewBox="1071.500 210.700 161.500 91.800">
<defs>
<linearGradient id="v2bg" x1="0" y1="0" x2="0" y2="1"><stop offset="0" stop-color="#d6b094"/><stop offset=".18" stop-color="#debda2"/><stop offset=".55" stop-color="#e6ccb4"/><stop offset="1" stop-color="#e2c4a8"/></linearGradient>
<radialGradient id="face2" cx=".5" cy=".42" r=".62"><stop offset="0" stop-color="#eecab8"/><stop offset=".65" stop-color="#e2b8a4"/><stop offset="1" stop-color="#c8988a"/></radialGradient></defs>
<rect x="1060" y="200" width="185" height="115" fill="url(#v2bg)"/>
<g filter="url(#b5)">
<rect x="1072" y="238" width="44" height="50" fill="#f6efea"/>
<rect x="1100" y="262" width="44" height="24" fill="#f2e8de" opacity=".8"/>
<rect x="1200" y="290" width="40" height="16" fill="#dcb484"/>
</g>
<rect x="1201" y="287" width="32" height="2" fill="#a87040" filter="url(#b1)"/>
<g filter="url(#b1)">
<path d="M1109 283c-.5-12-1-22-1.500-30" stroke="#4a5238" stroke-width="1.200" fill="none"/>
<path d="M1106 282c0-10 1-16 3-22" stroke="#5a6244" stroke-width="1" fill="none"/>
<path d="M1094 241.500c4 3 8 8 11 14-5-2-9-7-11-14z" fill="#3a4430"/>
<path d="M1108 243c3 0 5 6 4 14-1 5-3 8-4 8-2-6-3-14 0-22z" fill="#232a1c"/>
<path d="M1114 248c3 2 4 8 2 14-1 4-3 7-5 7 0-7 1-14 3-21z" fill="#2c3424"/>
<path d="M1098 255c3 1 6 4 8 9-4-1-7-4-8-9z" fill="#46503a"/>
<path d="M1119 258c-1 4-4 8-7 10 1-4 3-8 7-10z" fill="#3c4630"/>
<rect x="1182" y="270" width="3.500" height="9" rx="1.500" fill="#4a4438"/>
<rect x="1193.500" y="277" width="8" height="14" rx="1.500" fill="#f2ead2"/>
<rect x="1193" y="276" width="9" height="2.500" fill="#8a6a3a"/>
</g>
<g filter="url(#b2)">
<path d="M1116 305V290c3-8 12-14 26-17h32c14 3 22 9 26 17v15z" fill="#b9d4ea"/>
<path d="M1146 274h25l-3 31h-19z" fill="#eef2f6"/>
</g>
<g filter="url(#b1)">
<path d="M1140.500 262c-1-18 4-31 18-31.500 14 .5 18.500 12 17 28-1 8-2 14-4 18h-27c-2-4-3.500-9-4-14.500z" fill="#cda878"/>
<path d="M1150 233c6-2.500 14-2 19 1-6 0-13 0-19-1z" fill="#e2c296"/>
<rect x="1151" y="268" width="14" height="9" fill="#dcb09c"/>
<ellipse cx="1159" cy="255.500" rx="14.800" ry="19.500" fill="url(#face2)"/>
<path d="M1144 250c0-9 5-15 12-17-4 4-8 9-9 18z" fill="#cfa974"/>
<path d="M1174.500 250c0-9-4-14-10-16.500 4 4 7 9 8 17z" fill="#c9a26e"/>
<rect x="1146.500" y="249.800" width="8" height="2.400" fill="#5a4034" opacity=".8"/>
<rect x="1162" y="249.800" width="8" height="2.400" fill="#5a4034" opacity=".8"/>
<rect x="1156.500" y="252" width="3.500" height="9" fill="#d2a490" opacity=".7"/>
<rect x="1153.500" y="266" width="10" height="2.600" fill="#b86e6c" opacity=".9"/>
</g>
<rect x="1072.750" y="211.950" width="159" height="89.300" fill="none" stroke="#29e08c" stroke-width="2.500"/>
</svg>
</div>
<div class="abs tag nomic" style="left:1074px;top:280.4px;width:44.5px;background:rgba(82,76,72,.88);letter-spacing:-.3px">Олена</div>
<div class="abs ptitle" style="left:1080.7px;top:337.5px;width:147px;text-align:left;letter-spacing:.46px">Анастасія Поп...</div>
<div class="abs tag" style="left:1074px;top:370.7px;width:130px;"><svg class="abs" style="left:3px;top:2.500px" width="16" height="14" viewBox="0 0 16 14"><rect x="5.400" y=".8" width="5.200" height="8" rx="2.600" fill="#f0474f"/><path d="M4.200 6.800a3.800 3.800 0 0 0 7.600 0M8 10.600v1.800M5.800 12.600h4.400" fill="none" stroke="#f0474f" stroke-width="1.100"/><path d="M1.500 13 14.500 .8" stroke="#e2707c" stroke-width="1.200"/></svg>Анастасія Попова</div>
<div class="abs" id="av" style="left:1116px;top:401px;width:72.300px;height:67.500px;border-radius:6.500px;overflow:hidden;background:#8aa070">
<svg class="abs" style="left:0;top:0" width="72.300" height="67.500" viewBox="1116 401 72.300 67.500">
<defs><radialGradient id="face3" cx=".5" cy=".42" r=".62"><stop offset="0" stop-color="#f2d4c2"/><stop offset=".65" stop-color="#e6bea8"/><stop offset="1" stop-color="#c99a86"/></radialGradient></defs>
<rect x="1110" y="395" width="85" height="80" fill="#bcd4ec"/>
<g filter="url(#b2)">
<rect x="1112" y="398" width="34" height="20" fill="#c6dcf2"/>
<rect x="1116" y="418" width="22" height="22" fill="#d4e2ee"/>
<rect x="1160" y="398" width="30" height="14" fill="#a8c4dc"/>
<path d="M1121 401c3 8 5 16 5 24l3 14h-6l-1-14c-1-8-3-16-5-24z" fill="#4a4640"/>
<path d="M1126 420c4-6 8-10 13-12l1 2c-5 3-9 7-12 13z" fill="#5a554c"/>
<path d="M1125 412c-3-3-5-5-8-6v2c3 1 5 3 7 6z" fill="#5a554c"/>
<rect x="1162" y="408" width="30" height="40" fill="#3c6232"/>
<rect x="1170" y="404" width="14" height="10" fill="#5c8448"/>
<rect x="1142" y="401" width="24" height="8" fill="#6a8060"/>
<rect x="1166" y="445" width="26" height="26" fill="#7cac48"/>
<rect x="1112" y="438" width="24" height="10" fill="#a08a66"/>
<rect x="1112" y="430" width="14" height="9" fill="#8a9a72"/>
</g>
<g filter="url(#b1)">
<path d="M1116 470v-12c3-8 12-13 24-14h24c10 1 16 6 19 14v12z" fill="#16161a"/>
<path d="M1127.500 466l3.500-14" stroke="#6a6a70" stroke-width="2"/>
<path d="M1135 452c2-14 3-26 8-36 3-6 8-8 12-8s9 2 12 8c5 10 7 22 9.500 36-5 1-9-1-12-5h-19c-3 4-6 6-10.500 5z" fill="#e2cea4"/>
<path d="M1143 410c3-4 8-5.500 12-5.500s9 1.500 12 5.500c-4-1.500-8-2-12-2s-8 .5-12 2z" fill="#2a2850"/>
<rect x="1149" y="438" width="12" height="9" fill="#dcb49e"/>
<ellipse cx="1154.800" cy="426.500" rx="11.600" ry="16" fill="url(#face3)"/>
<rect x="1146" y="421.800" width="6.500" height="2" fill="#4a362e" opacity=".8"/>
<rect x="1157.500" y="421.800" width="6.500" height="2" fill="#4a362e" opacity=".8"/>
<rect x="1153" y="424" width="3" height="7" fill="#d6a892" opacity=".7"/>
<rect x="1150.500" y="433.800" width="8.500" height="2" fill="#b8706a" opacity=".9"/>
<path d="M1136 452c2 2 6 1 9-2l-1-8z" fill="#d8c294"/>
</g>
</svg>
</div>
<div class="abs tag" style="left:1074px;top:460.8px;width:110.5px;"><svg class="abs" style="left:3px;top:2.500px" width="16" height="14" viewBox="0 0 16 14"><rect x="5.400" y=".8" width="5.200" height="8" rx="2.600" fill="#f0474f"/><path d="M4.200 6.800a3.800 3.800 0 0 0 7.600 0M8 10.600v1.800M5.800 12.600h4.400" fill="none" stroke="#f0474f" stroke-width="1.100"/><path d="M1.500 13 14.500 .8" stroke="#e2707c" stroke-width="1.200"/></svg>Наталія Єрмак</div>
<div class="abs" id="v3" style="left:1071.700px;top:482.100px;width:160.600px;height:90.200px;border-radius:0 0 6px 6px;overflow:hidden;background:#c6cccb">
<svg class="abs" style="left:0;top:0" width="160.600" height="90.200" viewBox="1071.700 482.100 160.600 90.200">
<defs><linearGradient id="v3bg" x1="0" y1="0" x2="0" y2="1"><stop offset="0" stop-color="#bcc2c0"/><stop offset=".3" stop-color="#c2c8c6"/><stop offset=".42" stop-color="#c6cccb"/><stop offset="1" stop-color="#cdd3d3"/></linearGradient>
<radialGradient id="hair3" cx=".5" cy=".3" r=".7"><stop offset="0" stop-color="#c4bca4"/><stop offset=".5" stop-color="#a39a80"/><stop offset="1" stop-color="#6e6450"/></radialGradient></defs>
<rect x="1065" y="478" width="175" height="100" fill="url(#v3bg)"/>
<g filter="url(#b1)">
<path d="M1071 482h162v2.500L1071 492.500z" fill="#cfd3ce"/>
<path d="M1071 492.300L1233 484.300v1.600L1071 494z" fill="#8e928c"/>
<path d="M1086 493.500L1233 486.500v2L1086 496z" fill="#b0b6b2" opacity=".8"/>
<rect x="1071" y="488.500" width="15.500" height="23" fill="#cfcfc8"/>
<rect x="1071" y="499" width="13" height="1.500" fill="#8a8a84"/>
<rect x="1071" y="504" width="14" height="1.200" fill="#9a9a94"/>
<path d="M1087 492c3 0 5 2 4.500 6s-2 8-4 12" fill="none" stroke="#7a7e78" stroke-width="1.100"/>
<path d="M1071 510.500L1233 516v3.500L1071 514z" fill="#d6dad8"/>
<path d="M1071 514L1233 519.500v1.800L1071 515.600z" fill="#9ea4a2"/>
</g>
<g filter="url(#b2)" opacity=".55">
<rect x="1078" y="546" width="3" height="2" fill="#8a9090"/><rect x="1090" y="541" width="2.500" height="2" fill="#8a9090"/><rect x="1102" y="539" width="3" height="2.500" fill="#8a9090"/><rect x="1115" y="536" width="2.500" height="2" fill="#8a9090"/><rect x="1124" y="548" width="8" height="2.500" fill="#7a8080"/><rect x="1131" y="533" width="2" height="2" fill="#8a9090"/>
</g>
<g filter="url(#b1)">
<path d="M1132.500 575v-14c0-14 8-24 18.500-24s18.500 10 18.500 24v14z" fill="url(#hair3)"/>
<path d="M1140 575v-7c3-3 7-4 11-4s8 1 11 4v7z" fill="#86685a"/>
</g>
</svg>
</div>
<div class="abs tag" style="left:1074px;top:551.2px;width:134.5px;letter-spacing:-.12px;"><svg class="abs" style="left:3px;top:2.500px" width="16" height="14" viewBox="0 0 16 14"><rect x="5.400" y=".8" width="5.200" height="8" rx="2.600" fill="#f0474f"/><path d="M4.200 6.800a3.800 3.800 0 0 0 7.600 0M8 10.600v1.800M5.800 12.600h4.400" fill="none" stroke="#f0474f" stroke-width="1.100"/><path d="M1.500 13 14.500 .8" stroke="#e2707c" stroke-width="1.200"/></svg>Наталія Герулайтіс</div>
<div class="abs" style="left:1115.500px;top:572.500px;width:73px;height:32px;background:#0e1012;border-radius:0 0 4px 4px"></div>
<svg class="abs" style="left:1144px;top:584px" width="15" height="10" viewBox="0 0 15 10"><path d="M1.500 1.800 7.500 7.600 13.500 1.800" fill="none" stroke="#c4c4c4" stroke-width="1.800"/></svg>

<div class="abs" style="left:0;top:28px;width:1011px;height:1px;background:#101214"></div>
<div id="bbar" class="abs"><!--BBAR--><svg class="abs" style="left:0;top:0" width="1280" height="59" viewBox="0 620 1280 59" font-family="Liberation Sans, sans-serif">
<g fill="none" stroke="#e6e6e6" stroke-width="1.500"><rect x="48.800" y="633" width="7.400" height="13.500" rx="3.700"/><path d="M45.500 643.500a7 7 0 0 0 14 0M52.500 650.600v4M48.500 655h8"/></g>
<path d="M40.800 654.600L63.800 632.600" stroke="#e2265c" stroke-width="1.900"/>
<path d="M80.89999999999999 645.6L84.3 642.2L87.7 645.6" fill="none" stroke="#e8e8e8" stroke-width="1.500"/>
<text x="52.5" y="672" text-anchor="middle" font-size="12.2" font-weight="bold" fill="#f0f0f0" textLength="25" lengthAdjust="spacingAndGlyphs">Звук</text>
<g fill="none" stroke="#e6e6e6" stroke-width="1.500" stroke-linejoin="round"><rect x="133.500" y="637.300" width="16" height="13.400" rx="3"/><path d="M151.500 642.200l5.200-3.300v10.200l-5.200-3.300z"/></g>
<path d="M178.9 645.6L182.3 642.2L185.70000000000002 645.6" fill="none" stroke="#e8e8e8" stroke-width="1.500"/>
<text x="145" y="672" text-anchor="middle" font-size="12.2" font-weight="bold" fill="#f0f0f0" textLength="34.5" lengthAdjust="spacingAndGlyphs">Видео</text>
<g fill="none" stroke="#e6e6e6" stroke-width="1.500"><circle cx="293" cy="638.800" r="2.700"/><path d="M289.300 652v-3.200a3.700 3.700 0 0 1 7.400 0V652z" stroke-linejoin="round"/><circle cx="301.800" cy="641.300" r="2.300"/><path d="M298 652h8.200v-2.200a4 4 0 0 0-7-2.700" stroke-linejoin="round"/></g>
<text x="320.800" y="647" text-anchor="middle" font-size="10.800" fill="#9c9c9c" textLength="12.500" lengthAdjust="spacingAndGlyphs">33</text>
<path d="M347.1 645.6L350.5 642.2L353.9 645.6" fill="none" stroke="#e8e8e8" stroke-width="1.500"/>
<text x="297.3" y="672" text-anchor="middle" font-size="12.2" font-weight="bold" fill="#f0f0f0" textLength="58" lengthAdjust="spacingAndGlyphs">Участники</text>
<g fill="none" stroke="#e6e6e6" stroke-width="1.500" stroke-linejoin="round"><path d="M403 636.500v-.5a3 3 0 0 1 3-3h8.800a3 3 0 0 1 3 3v6.500a3 3 0 0 1-3 3h-.6"/><path d="M399.700 636.800h9.600a3 3 0 0 1 3 3v6.400a3 3 0 0 1-3 3h-4.300l-3.500 3.400v-3.400h-1.800a3 3 0 0 1-3-3v-6.400a3 3 0 0 1 3-3z"/></g>
<g fill="#e6e6e6"><circle cx="401.300" cy="643" r=".9"/><circle cx="404.500" cy="643" r=".9"/><circle cx="407.700" cy="643" r=".9"/></g>
<path d="M437.40000000000003 645.6L440.8 642.2L444.2 645.6" fill="none" stroke="#e8e8e8" stroke-width="1.500"/>
<text x="408" y="672" text-anchor="middle" font-size="12.2" font-weight="bold" fill="#f0f0f0" textLength="18.5" lengthAdjust="spacingAndGlyphs">Чат</text>
<path d="M503.800 652.600c-5.500-3-10.500-7-11.200-11.600-.6-4 2.200-6.900 5.400-6.700 2.600.2 4.200 2 4.900 3.900 1.200-2 3.300-3.600 6-3.400 3.600.3 6 3.600 4.900 7.500-1.200 4.100-5.400 7.500-10 10.300z" fill="none" stroke="#e6e6e6" stroke-width="1.500" stroke-linejoin="round"/>
<path d="M539.6 645.6L543 642.2L546.4 645.6" fill="none" stroke="#e8e8e8" stroke-width="1.500"/>
<text x="504" y="672" text-anchor="middle" font-size="12.2" font-weight="bold" fill="#f0f0f0" textLength="85.5" lengthAdjust="spacingAndGlyphs">Отреагировать</text>
<g fill="none" stroke="#e6e6e6" stroke-width="1.400" stroke-linejoin="round" stroke-linecap="round"><path d="M595 647.500v-10.500a1.300 1.300 0 0 1 2.600 0v6.500-8.800a1.300 1.300 0 0 1 2.600 0v8.500-9.600a1.300 1.300 0 0 1 2.600 0v9.600-8.300a1.300 1.300 0 0 1 2.600 0v11.300l2.200-3.300a1.400 1.400 0 0 1 2.500 1.200c-1.200 3-2.300 5.300-3.700 7.300-1.500 2.200-3.400 3.200-6.300 3.200-4.800 0-7.700-2.800-7.700-7.100z"/></g>
<path d="M632.9 645.6L636.3 642.2L639.6999999999999 645.6" fill="none" stroke="#e8e8e8" stroke-width="1.500"/>
<text x="601.6" y="672" text-anchor="middle" font-size="12.2" font-weight="bold" fill="#f0f0f0" textLength="76.7" lengthAdjust="spacingAndGlyphs">Поднять руку</text>
<rect x="685" y="633.800" width="24.300" height="19.500" rx="3.200" fill="#21e07e"/><path d="M697.200 649.500v-10.800M692.800 642.800l4.400-4.400 4.400 4.400" fill="none" stroke="#0a0a0a" stroke-width="2.100"/>
<path d="M730.9 645.6L734.3 642.2L737.6999999999999 645.6" fill="none" stroke="#e8e8e8" stroke-width="1.500"/>
<text x="697.6" y="672" text-anchor="middle" font-size="12.2" font-weight="bold" fill="#f0f0f0" textLength="66.3" lengthAdjust="spacingAndGlyphs">Поделиться</text>
<path d="M834 634.200l8.600 2.600v6.200c0 5-3.400 8.800-8.600 10.800-5.200-2-8.600-5.800-8.600-10.800v-6.200z" fill="none" stroke="#e6e6e6" stroke-width="1.500" stroke-linejoin="round"/><path d="M834 637v6.400h-5.900v-4.600zM834 643.400h5.900c-.2 3.300-2.300 5.800-5.900 7.500z" fill="#e6e6e6"/>
<text x="833.8" y="672" text-anchor="middle" font-size="12.2" font-weight="bold" fill="#f0f0f0" textLength="158.5" lengthAdjust="spacingAndGlyphs">Инструменты организатора</text>
<rect x="967.2" y="632" width="11" height="11" rx="1.600" fill="#f4f4f4"/>
<rect x="967.2" y="644.8" width="11" height="11" rx="1.600" fill="#f4f4f4"/>
<rect x="980" y="632" width="11" height="11" rx="1.600" fill="#f4f4f4"/>
<rect x="980" y="644.8" width="11" height="11" rx="1.600" fill="#f4f4f4"/>
<text x="979.5" y="672" text-anchor="middle" font-size="12.2" font-weight="bold" fill="#f0f0f0" textLength="99.3" lengthAdjust="spacingAndGlyphs">Сессионные залы</text>
<circle cx="1092.400" cy="643.700" r="11.500" fill="none" stroke="#e6e6e6" stroke-width="1.500"/><g fill="#e6e6e6"><circle cx="1087.400" cy="643.700" r="1.150"/><circle cx="1092.400" cy="643.700" r="1.150"/><circle cx="1097.400" cy="643.700" r="1.150"/></g>
<text x="1092.3" y="672" text-anchor="middle" font-size="12.2" font-weight="bold" fill="#f0f0f0" textLength="91.5" lengthAdjust="spacingAndGlyphs">Дополнительно</text>
<path d="M1216.700 643.700l5.800-10h12l5.800 10-5.800 10h-12z" fill="none" stroke="#e0265c" stroke-width="1.800" stroke-linejoin="round"/><path d="M1224.900 640l7.200 7.400M1232.100 640l-7.200 7.400" stroke="#fff" stroke-width="2.300"/>
<text x="1229.3" y="672" text-anchor="middle" font-size="12.2" font-weight="bold" fill="#f0f0f0" textLength="70.3" lengthAdjust="spacingAndGlyphs">Завершение</text>
</svg><!--/BBAR--></div>
</div>
</body></html>
